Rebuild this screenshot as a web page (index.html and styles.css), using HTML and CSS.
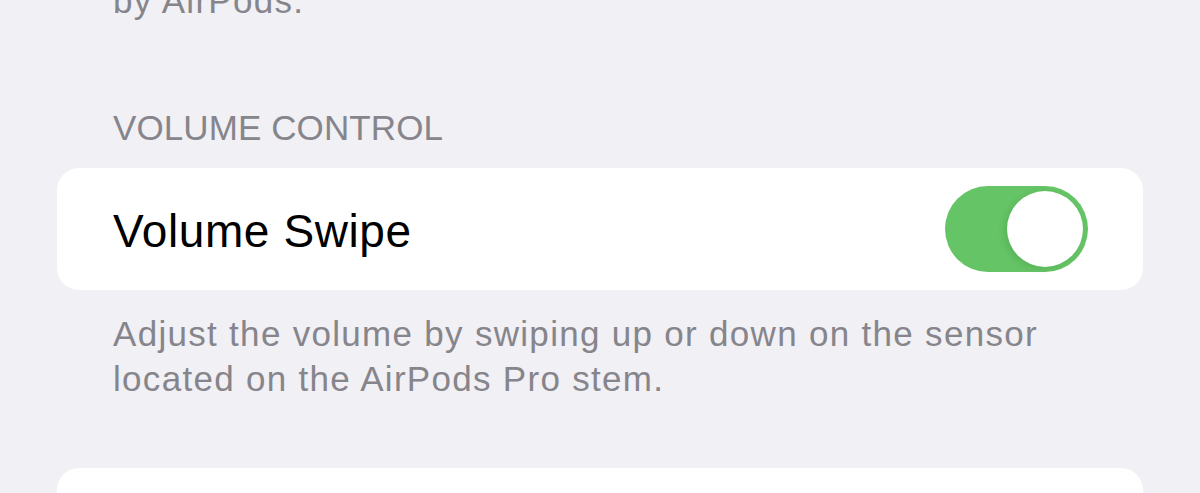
FILE: index.html
```html
<!DOCTYPE html>
<html lang="en">
<head>
<meta charset="utf-8">
<title>Volume Control</title>
<link rel="stylesheet" href="styles.css">
</head>
<body>
<main class="settings">
  <p class="footnote footnote-top">by AirPods.</p>
  <h2 class="section-header">VOLUME CONTROL</h2>
  <section class="card">
    <div class="row">
      <span class="row-label">Volume Swipe</span>
      <span class="toggle on" role="switch" aria-checked="true"><span class="knob"></span></span>
    </div>
  </section>
  <p class="footnote">Adjust the volume by swiping up or down on the sensor<br>located on the AirPods Pro stem.</p>
  <section class="card card-next"></section>
</main>
</body>
</html>
```

FILE: styles.css
```css
html, body {
  margin: 0;
  padding: 0;
  background: #f1f0f5;
  overflow: hidden;
}

body {
  width: 1200px;
  height: 493px;
  font-family: "Liberation Sans", Arial, sans-serif;
}

.settings {
  display: flex;
  flex-direction: column;
  padding: 0 57px;
  margin-top: -22px;
}

.footnote {
  margin: 0;
  padding: 0 56px;
  font-size: 35px;
  line-height: 45px;
  letter-spacing: 1.3px;
  color: #86858b;
}

.footnote-top {
  margin-bottom: 84px;
}

.section-header {
  margin: 0 0 19px;
  padding: 0 56px;
  font-size: 35px;
  line-height: 42px;
  font-weight: normal;
  color: #86858b;
  letter-spacing: 0.1px;
}

.card {
  background: #ffffff;
  border-radius: 22px;
}

.row {
  height: 122px;
  display: flex;
  align-items: center;
  justify-content: space-between;
  padding: 0 55px 0 56px;
}

.row-label {
  font-size: 46px;
  line-height: 52px;
  letter-spacing: 0.6px;
  color: #000000;
  padding-top: 4px;
}

.toggle {
  width: 143px;
  height: 86px;
  border-radius: 43px;
  background: #65c466;
  display: flex;
  align-items: center;
  justify-content: flex-end;
  padding: 0 5px;
  box-sizing: border-box;
}

.knob {
  width: 76px;
  height: 76px;
  border-radius: 50%;
  background: #ffffff;
  box-shadow: -3px 2px 6px rgba(0, 60, 0, 0.12);
}

.card + .footnote {
  margin-top: 21px;
}

.card-next {
  margin-top: 67px;
  height: 25px;
  border-radius: 22px 22px 0 0;
}
```
